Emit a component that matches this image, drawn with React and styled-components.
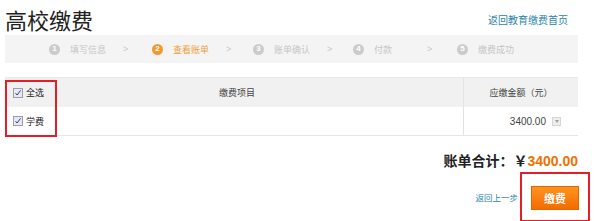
import React from 'react';
import styled, { createGlobalStyle } from 'styled-components';

const GlobalStyle = createGlobalStyle`
  html, body {
    margin: 0;
    padding: 0;
    background: #fff;
  }
  body {
    font-family: "Liberation Sans", "Noto Sans CJK SC", sans-serif;
    color: #333;
  }
`;

const Page = styled.div`
  width: 599px;
  height: 221px;
  box-sizing: border-box;
  padding: 6px 21px 0 5px;
  overflow: hidden;
`;

const Header = styled.div`
  display: flex;
  align-items: center;
  justify-content: space-between;
`;

const Title = styled.h1`
  margin: 0;
  font-size: 22px;
  line-height: 26px;
  font-weight: normal;
  color: #222;
  font-family: "Noto Sans CJK SC", sans-serif;
`;

const TopLink = styled.a`
  margin-right: 10px;
  font-size: 10px;
  color: #2b84a8;
  text-decoration: none;
  font-family: "Noto Sans CJK SC", sans-serif;
`;

const StepBar = styled.div`
  margin-top: 3px;
  height: 28px;
  display: flex;
  align-items: center;
  padding-left: 44px;
  background: #f4f4f4;
`;

const Step = styled.div`
  display: flex;
  align-items: center;
  width: ${props => props.w}px;
  flex: none;
`;

const Dot = styled.span`
  width: 11px;
  height: 11px;
  border-radius: 50%;
  flex: none;
  display: flex;
  align-items: center;
  justify-content: center;
  background: ${props => (props.active ? '#f39a2e' : '#cbcbcb')};
  color: #fff;
  font-size: 8px;
  font-weight: bold;
  line-height: 1;
`;

const StepLabel = styled.span`
  margin-left: 10px;
  width: 53px;
  flex: none;
  font-size: 9px;
  color: ${props => (props.active ? '#f2a040' : '#c6c6c6')};
  font-family: "Noto Sans CJK SC", sans-serif;
`;

const Chevron = styled.span`
  font-size: 9px;
  color: #c8c8c8;
`;

const Table = styled.div`
  position: relative;
  margin-top: 14px;
  font-family: "Noto Sans CJK SC", sans-serif;
  font-size: 9px;
`;

const Row = styled.div`
  display: grid;
  grid-template-columns: 52px 1fr 115px;
  align-items: stretch;
  height: ${props => (props.head ? 29 : 28)}px;
  background: ${props => (props.head ? '#f1f1f1' : '#fff')};
  border-top: ${props => (props.head ? '1px solid #e9e9e9' : 'none')};
  border-bottom: ${props => (props.head ? 'none' : '1px solid #e6e6e6')};
`;

const CheckCell = styled.label`
  display: flex;
  align-items: center;
  gap: 3px;
  padding-left: 8px;
  color: #222;
`;

const ItemCell = styled.div`
  display: flex;
  align-items: center;
  justify-content: center;
  padding-right: 46px;
  color: #444;
`;

const AmountCell = styled.div`
  display: flex;
  align-items: center;
  justify-content: ${props => (props.head ? 'center' : 'flex-end')};
  padding-right: ${props => (props.head ? 0 : 17)}px;
  border-left: 1px solid #e3e3e3;
  color: #444;
`;

const Amount = styled.span`
  font-family: "Liberation Sans", sans-serif;
  font-size: 10px;
  color: #444;
`;

const Dropdown = styled.span`
  margin-left: 6px;
  width: 9px;
  height: 9px;
  background: #eeeeee;
  border: 1px solid #d6d6d6;
  box-sizing: border-box;
  display: flex;
  align-items: center;
  justify-content: center;
  &::after {
    content: '';
    border-left: 2px solid transparent;
    border-right: 2px solid transparent;
    border-top: 3px solid #a0a0a0;
  }
`;

const Mark = styled.span`
  position: absolute;
  left: 0;
  top: 3px;
  width: 52px;
  height: 57px;
  box-sizing: border-box;
  border: 2px solid #e41d27;
  pointer-events: none;
`;

const Total = styled.div`
  margin-top: 14px;
  text-align: right;
  font-size: 14px;
  line-height: 20px;
  font-weight: bold;
  color: #222;
  font-family: "Noto Sans CJK SC", sans-serif;
`;

const TotalNum = styled.span`
  font-family: "Liberation Sans", sans-serif;
  color: #f07100;
`;

const Footer = styled.div`
  display: flex;
  align-items: center;
  justify-content: flex-end;
  margin-right: -12px;
  margin-top: 1px;
`;

const BackLink = styled.a`
  margin-right: 2px;
  font-size: 8.5px;
  color: #2b84a8;
  text-decoration: none;
  font-family: "Noto Sans CJK SC", sans-serif;
`;

const Highlight = styled.div`
  border: 2px solid #e41d27;
  padding: 12px 9px 10px;
`;

const PayButton = styled.button`
  width: 48px;
  height: 24px;
  padding: 0;
  border: 1px solid #e46600;
  background: linear-gradient(#ff9420, #f26c00);
  color: #fff;
  font-size: 11px;
  font-weight: bold;
  font-family: "Noto Sans CJK SC", sans-serif;
  cursor: pointer;
`;

const CheckBox = () => (
  <svg width="10" height="10" viewBox="0 0 10 10">
    <rect x="0.5" y="0.5" width="9" height="9" fill="#e8e8f2" stroke="#9a9db4" />
    <path d="M2.5 5.2 L4.1 7 L7.6 2.4" fill="none" stroke="#3a3d66" strokeWidth="1" />
  </svg>
);

const steps = [
  { n: 1, label: '填写信息', w: 103 },
  { n: 2, label: '查看账单', w: 101, active: true },
  { n: 3, label: '账单确认', w: 100 },
  { n: 4, label: '付款', w: 104 },
  { n: 5, label: '缴费成功', w: 100, last: true },
];

export default function App() {
  return (
    <>
      <GlobalStyle />
      <Page>
        <Header>
          <Title>高校缴费</Title>
          <TopLink href="#">返回教育缴费首页</TopLink>
        </Header>

        <StepBar>
          {steps.map(s => (
            <Step key={s.n} w={s.w}>
              <Dot active={s.active}>{s.n}</Dot>
              <StepLabel active={s.active}>{s.label}</StepLabel>
              {!s.last && <Chevron>&gt;</Chevron>}
            </Step>
          ))}
        </StepBar>

        <Table>
          <Row head>
            <CheckCell>
              <CheckBox />
              全选
            </CheckCell>
            <ItemCell>缴费项目</ItemCell>
            <AmountCell head>应缴金额（元）</AmountCell>
          </Row>
          <Row>
            <CheckCell>
              <CheckBox />
              学费
            </CheckCell>
            <ItemCell />
            <AmountCell>
              <Amount>3400.00</Amount>
              <Dropdown />
            </AmountCell>
          </Row>
          <Mark />
        </Table>

        <Total>
          账单合计：￥<TotalNum>3400.00</TotalNum>
        </Total>

        <Footer>
          <BackLink href="#">返回上一步</BackLink>
          <Highlight>
            <PayButton>缴费</PayButton>
          </Highlight>
        </Footer>
      </Page>
    </>
  );
}
